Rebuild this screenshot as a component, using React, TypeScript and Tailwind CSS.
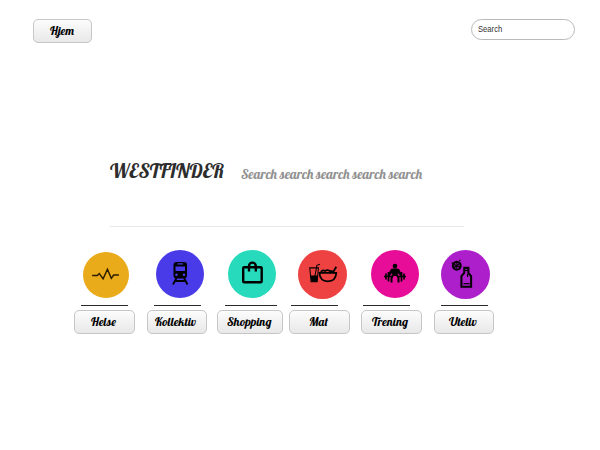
import React from 'react';

const script = "font-['Lobster','Liberation_Serif',serif] font-normal whitespace-nowrap";
const button =
  'flex h-6 items-center rounded-[5px] border border-[#c6c6c6] bg-linear-to-b from-[#fcfcfc] to-[#e8e8e8] pb-[1px] text-[12px] leading-none text-black';

function Pulse() {
  return <path d="M9.5 24.500H15l2-2 4 5.500 4.500-10 4 9.500L32 24h5.500" fill="none" stroke="#2d1c05" strokeWidth="1.500" />;
}

function Train() {
  return (
    <g>
      <path fillRule="evenodd" d="M20.500 12h7.500q3 0 3 3v10.500q0 3-3 3h-7.500q-3 0-3-3V15q0-3 3-3zM19.500 16.500v4.500h9.500v-4.500zM21.500 13.300v1.200h5.500v-1.200zM20.500 23.500a1.300 1.300 0 100 2.600 1.300 1.300 0 000-2.600zm7.500 0a1.300 1.300 0 100 2.600 1.300 1.300 0 000-2.600z" />
      <path d="M20.500 28l-3.500 6.500M28 28l3.500 6.500M19.500 31h9.500" fill="none" stroke="black" strokeWidth="1.800" />
    </g>
  );
}

function Bag() {
  return (
    <g fill="none" stroke="black" strokeWidth="2.400">
      <rect x="15.200" y="17.200" width="18.500" height="15" rx="1" />
      <path d="M21 21.500V16a3.400 3.400 0 016.800 0v5.500" />
    </g>
  );
}

function Meal() {
  return (
    <g fill="none" stroke="black">
      <path d="M11.500 17.500h8.500l-1.200 13.500h-6zM16.500 26l2-11 3-1" strokeWidth="1" />
      <path d="M12.500 25h6.700l-.6 6h-5.500z" fill="black" stroke="none" />
      <path d="M21 22.500h16.500q-.5 8-8.300 8.300-7.700-.3-8.200-8.300z" strokeWidth="1.700" />
      <path d="M22.500 21.500q1.500-2.500 4-1 2.500-1.500 4.500 0l3 .5M34.500 21.500l3-5" strokeWidth="1.800" />
    </g>
  );
}

function Lifter() {
  return (
    <g>
      <circle cx="24" cy="16" r="2.300" />
      <path d="M20 19q4-1.500 8 0l3.500 6.500-1.500 1.500-3-4-.5 3h-5l-.5-3-3 4-1.500-1.500z" />
      <path d="M13 26.500h8M27 26.500h8M15 23.500v6M17.500 22v9.500M33 23.500v6M30.500 22v9.500" fill="none" stroke="black" strokeWidth="1.700" />
      <path d="M22 25l-1.500 3v4.500M26 25l1.500 3v4.500" fill="none" stroke="black" strokeWidth="2" />
    </g>
  );
}

function Nightlife() {
  return (
    <g fill="none" stroke="black">
      <circle cx="15.500" cy="15.500" r="3.800" strokeWidth="2" />
      <path d="M12 13.500l7 4M12.500 18l6.500-5.500M15.500 10.500v9M12 16h7M18 11l1-1.500M10.500 12.500l2 1" strokeWidth="1" />
      <path d="M22.800 17.500h4v5l2.700 3V36h-9.500V25.500l2.800-3z" strokeWidth="2" />
      <path d="M22 33h6M23 20h3.500M26 23.500v3" strokeWidth="1.200" />
    </g>
  );
}

const items = [
  { name: 'Helse', Icon: Pulse, column: 'w-[61px]', circle: 'mt-[2px] ml-[9px] size-[46px] bg-[#e9ab19]', line: 'ml-[7px] w-[47px]', text: 'pl-4' },
  { name: 'Kollektiv', Icon: Train, column: 'ml-3 w-[60px]', circle: 'ml-[9px] size-12 bg-[#493be8]', line: 'ml-[7px] w-[47px]', text: 'pl-[7px]' },
  { name: 'Shopping', Icon: Bag, column: 'ml-[10px] w-[66px]', circle: 'ml-[11px] size-12 bg-[#26dabb]', line: 'ml-2 w-[52px]', text: 'pl-[9px]' },
  { name: 'Mat', Icon: Meal, column: 'ml-1.5 w-[61px]', circle: 'ml-[9px] size-[49px] bg-[#ee4141]', line: 'ml-[2px] w-[47px]', text: 'pl-[19px]' },
  { name: 'Trening', Icon: Lifter, column: 'ml-[11px] w-[61px]', circle: 'ml-[10px] size-12 bg-[#e70d98]', line: 'ml-[2px] w-[47px]', text: 'pl-[10px]' },
  { name: 'Uteliv', Icon: Nightlife, column: 'ml-3 w-[60px]', circle: 'ml-[7px] size-[49px] bg-[#ad1fca]', line: 'ml-[7px] w-[47px]', text: 'pl-[14px]' },
];

export default function App() {
  return (
    <main className="h-[450px] w-[600px] overflow-hidden bg-white">
      <header className="flex h-[60px] items-start justify-between pt-[19px] pr-[25px] pl-[33px]">
        <button className={`${button} ${script} w-[59px] pl-4`}>Hjem</button>
        <label className="flex h-[21px] w-[104px] items-center rounded-full border border-[#b9b9b9] bg-white pl-[6px]">
          <input
            aria-label="Search"
            placeholder="Search"
            className="w-[90px] origin-left scale-x-[0.9] bg-transparent font-['Liberation_Sans',sans-serif] text-[8.500px] text-[#333] outline-none placeholder:text-[#333]"
          />
        </label>
      </header>
      <section className="ml-[110px] flex h-[167px] w-[354px] items-start border-b border-[#e9e9e9] pt-[100px]">
        <h1 className={`${script} w-[131px] text-[20px] leading-[22px] text-[#2d2d2d]`}>WESTFINDER</h1>
        <p className={`${script} pt-1 text-[13.333px] leading-5 text-[#919191]`}>Search search search search search</p>
      </section>
      <nav className="flex pt-[23px] pl-[74px]">
        {items.map(({ name, Icon, column, circle, line, text }) => (
          <div key={name} className={column}>
            <div className="flex h-[49px] items-start">
              <div className={`shrink-0 rounded-full ${circle}`}>
                <svg viewBox="0 0 48 48" className="size-full"><Icon /></svg>
              </div>
            </div>
            <div className={`mt-[6px] h-px bg-[#292929] ${line}`} />
            <button className={`${button} ${script} mt-1 w-full ${text}`}>{name}</button>
          </div>
        ))}
      </nav>
    </main>
  );
}
